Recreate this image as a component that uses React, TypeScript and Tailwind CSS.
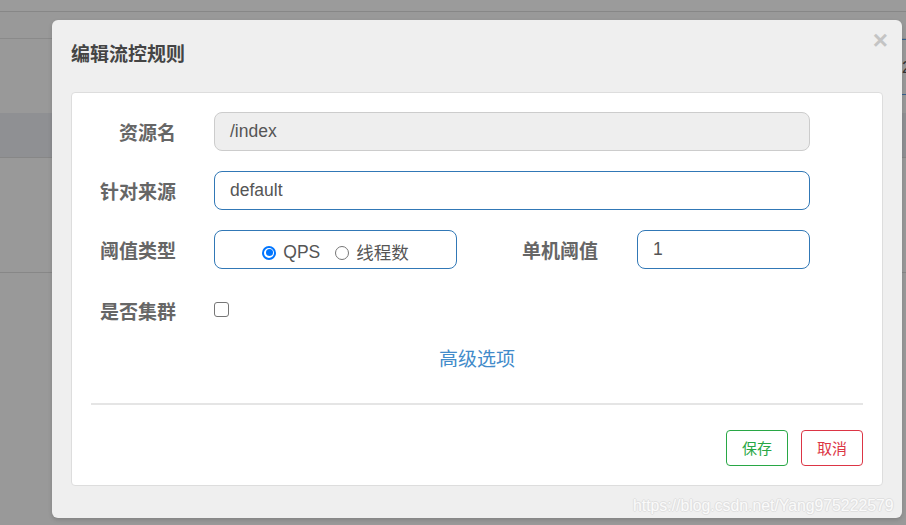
export default function App() {
  const label = "text-[19px] font-bold text-[#666] text-right w-[85px] shrink-0 leading-none";
  const cjk = { fontFamily: '"Noto Sans CJK SC", "Noto Sans", sans-serif' };
  const latin = { fontFamily: '"Liberation Sans", sans-serif' };
  return (
    <div className="relative w-[906px] h-[525px] overflow-hidden bg-[#999999]" style={cjk}>
      {/* dimmed page behind the modal */}
      <div className="h-[11px] bg-[#9b9b9b]" />
      <div className="h-px bg-[#878787]" />
      <div className="h-[26px]" />
      <div className="h-px bg-[#8a8a8a]" />
      <div className="h-[74px]" />
      <div className="h-[44px] bg-[#8f9093]" />
      <div className="h-px bg-[#878787]" />
      <div className="h-[114px]" />
      <div className="h-px bg-[#878787]" />

      <div className="absolute left-[902px] top-[39px] w-[4px] h-[56px] border-y border-[#35608f] overflow-hidden flex items-center">
        <span className="text-[17px] text-[#333] leading-none" style={latin}>2</span>
      </div>

      {/* modal */}
      <div className="absolute left-[52px] top-[20px] w-[850px] rounded-[6px] bg-[#efefef] px-[19px] pb-[32px] shadow-[0_2px_4px_rgba(0,0,0,0.15)]">
        <div className="relative h-[72px] flex items-center pb-[8px]">
          <h4 className="text-[19px] font-bold text-[#444] leading-none">编辑流控规则</h4>
          <span
            className="absolute right-[-5px] top-[7px] text-[26px] font-bold text-[#c4c4c4] leading-none"
            style={latin}
          >
            ×
          </span>
        </div>

        <div className="bg-white border border-[#dddddd] rounded-[4px] px-[19px] pt-[19px] pb-[19px]">
          <div className="flex items-center h-[39px]">
            <div className={label}>资源名</div>
            <div
              className="ml-[38px] w-[596px] h-[39px] flex items-center px-[15px] rounded-[8px] border border-[#cccccc] bg-[#eeeeee] text-[17.5px] text-[#555]"
              style={latin}
            >
              /index
            </div>
          </div>

          <div className="flex items-center h-[39px] mt-[20px]">
            <div className={label}>针对来源</div>
            <div
              className="ml-[38px] w-[596px] h-[39px] flex items-center px-[15px] rounded-[8px] border border-[#3178b6] text-[17.5px] text-[#555]"
              style={latin}
            >
              default
            </div>
          </div>

          <div className="flex items-center h-[39px] mt-[20px]">
            <div className={label}>阈值类型</div>
            <div className="ml-[38px] w-[243px] h-[39px] flex items-center justify-center pt-[6px] rounded-[8px] border border-[#3178b6] text-[17.5px] text-[#555]">
              <span className="w-[14px] h-[14px] rounded-full border-2 border-[#0075ff] flex items-center justify-center">
                <span className="w-[7px] h-[7px] rounded-full bg-[#0075ff]" />
              </span>
              <span className="ml-[7px]" style={latin}>QPS</span>
              <span className="ml-[15px] w-[14px] h-[14px] rounded-full border border-[#767676]" />
              <span className="ml-[7px]">线程数</span>
            </div>
            <div className={label + " ml-[56px]"}>单机阈值</div>
            <div
              className="ml-[39px] w-[173px] h-[39px] flex items-center px-[15px] rounded-[8px] border border-[#3178b6] text-[17.5px] text-[#555] pb-[1px]"
              style={latin}
            >
              1
            </div>
          </div>

          <div className="flex items-center h-[40px] mt-[21px]">
            <div className={label}>是否集群</div>
            <span className="ml-[38px] w-[15px] h-[15px] rounded-[3px] border border-[#767676] -mt-[2px]" />
          </div>

          <div className="flex items-center justify-center h-[34px] mt-[10px]">
            <span className="text-[19px] text-[#428bca] leading-none">高级选项</span>
          </div>

          <div className="h-[2px] bg-[#e5e5e5] mt-[29px]" />

          <div className="flex justify-end gap-[13px] mt-[25px]">
            <button className="w-[62px] h-[36px] rounded-[4px] border border-[#28a745] text-[#28a745] text-[15px] bg-white">
              保存
            </button>
            <button className="w-[62px] h-[36px] rounded-[4px] border border-[#dc3545] text-[#dc3545] text-[15px] bg-white">
              取消
            </button>
          </div>
        </div>
      </div>

      <div
        className="absolute left-[633px] top-[498px] text-[15.8px] text-[#fafafa] leading-none [text-shadow:1px_0_#e0e0e0,-1px_0_#e0e0e0,0_1px_#e0e0e0,0_-1px_#e0e0e0]"
        style={latin}
      >
        https://blog.csdn.net/Yang975222579
      </div>
    </div>
  );
}
